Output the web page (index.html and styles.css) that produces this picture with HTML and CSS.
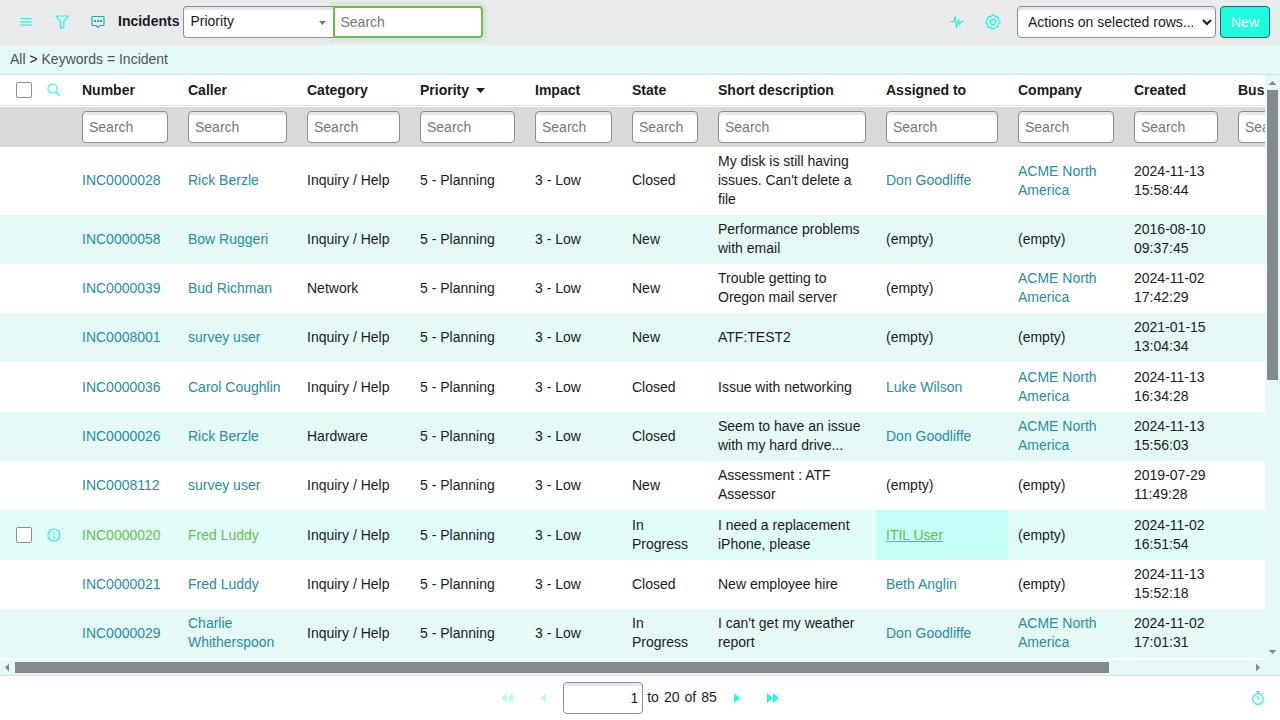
FILE: index.html
```html
<!DOCTYPE html>
<html lang="en">
<head>
<meta charset="utf-8">
<title>Incidents</title>
<link rel="stylesheet" href="styles.css">
</head>
<body>
<header class="navbar">
  <button class="icon-btn" type="button" aria-label="List controls"><svg width="14" height="14" viewBox="0 0 14 14"><path d="M1.500 3.500h11M1.500 6.800h11M1.500 10.200h11" /></svg></button>
  <button class="icon-btn" type="button" aria-label="Filter"><svg width="14" height="14" viewBox="0 0 14 14"><path d="M.8 1h12.400L8.800 6.500v5.800L5.500 13.300V6.500z" /></svg></button>
  <button class="icon-btn icon-btn--dark" type="button" aria-label="Discuss"><svg width="14" height="14" viewBox="0 0 14 14"><path d="M2 1.500h10a1 1 0 0 1 1 1v7a1 1 0 0 1-1 1H9l-2 2-2-2H2a1 1 0 0 1-1-1v-7a1 1 0 0 1 1-1z" /><path class="dots" d="M3 5h2v2H3zM6 5h2v2H6zM9 5h2v2H9z" /></svg></button>
  <h1 class="title">Incidents</h1>
  <div class="search-group">
    <div class="picker">
      <select class="field picker-select" aria-label="Search field"><option>Priority</option></select>
      <svg class="picker-caret" width="7" height="4" viewBox="0 0 7 4"><path d="M0 0h7L3.500 4z" /></svg>
    </div>
    <input class="field search-main" type="text" placeholder="Search" aria-label="Search text">
  </div>
  <div class="navbar-right">
    <button class="icon-btn" type="button" aria-label="Activity stream"><svg width="14" height="14" viewBox="0 0 14 14"><path d="M0 6.500h3.800L5 1.500 6.500 13 8.300 4.500l1.500 5 1.200-3h3" /></svg></button>
    <button class="icon-btn icon-btn--gear" type="button" aria-label="Personalize list"><svg width="16" height="16" viewBox="0 0 16 16"><path d="M10.100 13.200 9.200 14.900H6.800L5.900 13.200 4 13.700 2.300 12 2.800 10.100 1.100 9.200V6.800L2.800 5.900 2.300 4 4 2.300 5.900 2.800 6.800 1.100h2.400L10.100 2.800 12 2.300 13.700 4 13.200 5.900 14.900 6.800v2.400L13.200 10.100" /><circle cx="8" cy="8" r="2.700" /><path d="M11 12.500h3M12.500 11v3" /></svg></button>
    <select class="field actions" aria-label="Actions on selected rows"><option>Actions on selected rows...</option></select>
    <button class="btn-new" type="button">New</button>
  </div>
</header>
<nav class="breadcrumb" aria-label="Filter"><a href="#">All</a> &gt; <a href="#">Keywords = Incident</a></nav>
<main class="list">
  <div class="list-view">
    <table class="grid">
      <colgroup><col class="c-check"><col class="c-icon"><col class="c-number"><col class="c-caller"><col class="c-category"><col class="c-priority"><col class="c-impact"><col class="c-state"><col class="c-desc"><col class="c-assigned"><col class="c-company"><col class="c-created"><col class="c-business"></colgroup>
      <thead>
        <tr class="head">
          <th class="tick"><input class="check" type="checkbox" aria-label="Select all"></th>
          <th class="mark"><button class="icon-btn" type="button" aria-label="Toggle column search"><svg width="14" height="14" viewBox="0 0 14 14"><circle cx="5.500" cy="5.500" r="4.500" /><path d="M9 9l4 4" /></svg></button></th>
          <th>Number</th><th>Caller</th><th>Category</th>
          <th>Priority <svg class="sort" width="9" height="5" viewBox="0 0 9 5"><path d="M0 0h9L4.500 5z" /></svg></th>
          <th>Impact</th><th>State</th><th>Short description</th><th>Assigned to</th><th>Company</th><th>Created</th><th>Business duration</th>
        </tr>
        <tr class="filters">
          <td></td><td></td>
          <td><input class="field" type="text" placeholder="Search" aria-label="Search number"></td>
          <td><input class="field" type="text" placeholder="Search" aria-label="Search caller"></td>
          <td><input class="field" type="text" placeholder="Search" aria-label="Search category"></td>
          <td><input class="field" type="text" placeholder="Search" aria-label="Search priority"></td>
          <td><input class="field" type="text" placeholder="Search" aria-label="Search impact"></td>
          <td><input class="field" type="text" placeholder="Search" aria-label="Search state"></td>
          <td><input class="field" type="text" placeholder="Search" aria-label="Search short description"></td>
          <td><input class="field" type="text" placeholder="Search" aria-label="Search assigned to"></td>
          <td><input class="field" type="text" placeholder="Search" aria-label="Search company"></td>
          <td><input class="field" type="text" placeholder="Search" aria-label="Search created"></td>
          <td><input class="field" type="text" placeholder="Search" aria-label="Search business duration"></td>
        </tr>
      </thead>
      <tbody>
        <tr><td></td><td></td><td><a href="#">INC0000028</a></td><td><a href="#">Rick Berzle</a></td><td>Inquiry / Help</td><td>5 - Planning</td><td>3 - Low</td><td>Closed</td><td>My disk is still having issues. Can't delete a file</td><td><a href="#">Don Goodliffe</a></td><td><a href="#">ACME North America</a></td><td>2024-11-13 15:58:44</td><td></td></tr>
        <tr><td></td><td></td><td><a href="#">INC0000058</a></td><td><a href="#">Bow Ruggeri</a></td><td>Inquiry / Help</td><td>5 - Planning</td><td>3 - Low</td><td>New</td><td>Performance problems with email</td><td>(empty)</td><td>(empty)</td><td>2016-08-10 09:37:45</td><td></td></tr>
        <tr><td></td><td></td><td><a href="#">INC0000039</a></td><td><a href="#">Bud Richman</a></td><td>Network</td><td>5 - Planning</td><td>3 - Low</td><td>New</td><td>Trouble getting to Oregon mail server</td><td>(empty)</td><td><a href="#">ACME North America</a></td><td>2024-11-02 17:42:29</td><td></td></tr>
        <tr><td></td><td></td><td><a href="#">INC0008001</a></td><td><a href="#">survey user</a></td><td>Inquiry / Help</td><td>5 - Planning</td><td>3 - Low</td><td>New</td><td>ATF:TEST2</td><td>(empty)</td><td>(empty)</td><td>2021-01-15 13:04:34</td><td></td></tr>
        <tr><td></td><td></td><td><a href="#">INC0000036</a></td><td><a href="#">Carol Coughlin</a></td><td>Inquiry / Help</td><td>5 - Planning</td><td>3 - Low</td><td>Closed</td><td>Issue with networking</td><td><a href="#">Luke Wilson</a></td><td><a href="#">ACME North America</a></td><td>2024-11-13 16:34:28</td><td></td></tr>
        <tr><td></td><td></td><td><a href="#">INC0000026</a></td><td><a href="#">Rick Berzle</a></td><td>Hardware</td><td>5 - Planning</td><td>3 - Low</td><td>Closed</td><td>Seem to have an issue with my hard drive...</td><td><a href="#">Don Goodliffe</a></td><td><a href="#">ACME North America</a></td><td>2024-11-13 15:56:03</td><td></td></tr>
        <tr><td></td><td></td><td><a href="#">INC0008112</a></td><td><a href="#">survey user</a></td><td>Inquiry / Help</td><td>5 - Planning</td><td>3 - Low</td><td>New</td><td>Assessment : ATF Assessor</td><td>(empty)</td><td>(empty)</td><td>2019-07-29 11:49:28</td><td></td></tr>
        <tr class="active"><td class="tick"><input class="check" type="checkbox" aria-label="Select INC0000020"></td><td class="mark"><button class="icon-btn" type="button" aria-label="Preview INC0000020"><svg width="14" height="14" viewBox="0 0 14 14"><circle cx="7" cy="7" r="6" /><path d="M7 6v4.500M7 3.500v1.500" /></svg></button></td><td><a href="#">INC0000020</a></td><td><a href="#">Fred Luddy</a></td><td>Inquiry / Help</td><td>5 - Planning</td><td>3 - Low</td><td>In Progress</td><td>I need a replacement iPhone, please</td><td class="focused"><a href="#">ITIL User</a></td><td>(empty)</td><td>2024-11-02 16:51:54</td><td></td></tr>
        <tr><td></td><td></td><td><a href="#">INC0000021</a></td><td><a href="#">Fred Luddy</a></td><td>Inquiry / Help</td><td>5 - Planning</td><td>3 - Low</td><td>Closed</td><td>New employee hire</td><td><a href="#">Beth Anglin</a></td><td>(empty)</td><td>2024-11-13 15:52:18</td><td></td></tr>
        <tr><td></td><td></td><td><a href="#">INC0000029</a></td><td><a href="#">Charlie Whitherspoon</a></td><td>Inquiry / Help</td><td>5 - Planning</td><td>3 - Low</td><td>In Progress</td><td>I can't get my weather report</td><td><a href="#">Don Goodliffe</a></td><td><a href="#">ACME North America</a></td><td>2024-11-02 17:01:31</td><td></td></tr>
      </tbody>
    </table>
  </div>
  <div class="bar bar-y" aria-hidden="true">
    <svg width="15" height="15" viewBox="0 0 15 15"><path d="M3.500 10h8l-4-4z" /></svg>
    <div class="track"><div class="thumb"></div></div>
    <svg width="15" height="15" viewBox="0 0 15 15"><path d="M3.500 5h8l-4 4z" /></svg>
  </div>
  <div class="bar bar-x" aria-hidden="true">
    <svg width="15" height="15" viewBox="0 0 15 15"><path d="M9 3.500v8l-4-4z" /></svg>
    <div class="track"><div class="thumb"></div></div>
    <svg width="15" height="15" viewBox="0 0 15 15"><path d="M6 3.500v8l4-4z" /></svg>
  </div>
</main>
<footer class="footer">
  <div class="pager">
    <button class="page-btn" type="button" aria-label="First page" disabled><svg width="14" height="10" viewBox="0 0 14 10"><path d="M7 0v10L1 5zM13 0v10L7 5z" /></svg></button>
    <button class="page-btn" type="button" aria-label="Previous page" disabled><svg width="14" height="10" viewBox="0 0 14 10"><path d="M10 0v10L4 5z" /></svg></button>
    <input class="field page-input" type="text" value="1" aria-label="First row">
    <span class="range"><span>to</span><span>20</span><span>of</span><span>85</span></span>
    <button class="page-btn" type="button" aria-label="Next page"><svg width="14" height="10" viewBox="0 0 14 10"><path d="M4 0v10l6-5z" /></svg></button>
    <button class="page-btn" type="button" aria-label="Last page"><svg width="14" height="10" viewBox="0 0 14 10"><path d="M1 0v10l6-5zM7 0v10l6-5z" /></svg></button>
  </div>
  <button class="icon-btn timer" type="button" aria-label="Response time"><svg width="14" height="14" viewBox="0 0 14 14"><circle cx="7" cy="8" r="5.300" /><path d="M5 .6h4M7 .5v2M7 5v4M11.300 3l1-1" /></svg></button>
</footer>
</body>
</html>
```
FILE: styles.css
```css
* { box-sizing: border-box; }
html, body { height: 100%; }
body {
  margin: 0;
  display: flex;
  flex-direction: column;
  background: #fff;
  color: #181a1f;
  font: 14px/19px "Liberation Sans", Arial, sans-serif;
}
button, input, select { font: inherit; color: inherit; }
a { color: #278da0; text-decoration: none; }
svg { display: block; }

.field {
  height: 32px;
  min-width: 0;
  padding: 0 6px;
  border: 1px solid #8b8f9c;
  border-radius: 4px;
  background: #fff;
  box-shadow: inset 0 3px 1px #e7e7e8;
}
.field::placeholder { color: #747783; opacity: 1; }

.icon-btn {
  display: flex;
  align-items: center;
  justify-content: center;
  flex: none;
  width: 36px;
  height: 32px;
  padding: 0;
  border: 0;
  background: none;
}
.icon-btn svg { fill: none; stroke: #20f8dc; stroke-width: 1.2; }
.icon-btn--dark svg { stroke: #23ae9e; }
.icon-btn--dark .dots { fill: #23ae9e; stroke: none; }

.navbar {
  display: flex;
  align-items: center;
  flex: none;
  height: 45px;
  padding: 0 10px 1px 8px;
  background: #e8eaeb;
}
.title { margin: 0 4px 2px 2px; font-size: 14px; line-height: 19px; }
.search-group { display: flex; }
.picker { position: relative; }
.picker-select {
  display: block;
  width: 150px;
  padding-bottom: 2px;
  appearance: none;
  border-right: 0;
  border-radius: 4px 0 0 4px;
}
.picker-caret { position: absolute; right: 7px; top: 15px; fill: #747783; }
.search-main {
  width: 150px;
  padding: 0 5px;
  border: 2px solid #6abf4b;
  border-radius: 0 4px 4px 0;
  box-shadow: 0 0 0 4px #d9e6d7;
  outline: none;
}
.navbar-right { display: flex; align-items: center; margin-left: auto; }
.icon-btn--gear { margin-right: 6px; }
.actions { width: 199px; }
.btn-new {
  height: 32px;
  margin-left: 4px;
  padding: 0 10px;
  border: 1px solid #126e62;
  border-radius: 4px;
  background: #1ffbdf;
  color: #fff;
}

.breadcrumb {
  flex: none;
  height: 30px;
  padding: 5px 10px;
  border-bottom: 1px solid #dcdfe1;
  background: #e5faf7;
}
.breadcrumb a { color: #4c5260; }

.list {
  flex: 1;
  min-height: 0;
  display: grid;
  grid-template-columns: minmax(0, 1fr) 15px;
  grid-template-rows: minmax(0, 1fr) 15px;
  background: #e5faf7;
}
.list-view { overflow: hidden; background: #fff; }
.grid {
  width: 100%;
  min-width: 1428px;
  table-layout: fixed;
  border-collapse: separate;
  border-spacing: 0;
}
.c-check { width: 40px; }
.c-icon { width: 32px; }
.c-number { width: 106px; }
.c-caller { width: 119px; }
.c-category { width: 113px; }
.c-priority { width: 115px; }
.c-impact { width: 97px; }
.c-state { width: 86px; }
.c-desc { width: 168px; }
.c-assigned { width: 132px; }
.c-company { width: 116px; }
.c-created { width: 104px; }

.grid th {
  height: 31px;
  padding: 0 10px;
  border-bottom: 1px solid #dcdfe1;
  text-align: left;
  white-space: nowrap;
}
.grid .sort { display: inline-block; margin: 0 0 2px 3px; fill: #181a1f; }
.grid td { padding: 5px 10px 6px; vertical-align: middle; }
.grid .filters td { padding: 4px 10px; border-top: 1px solid #fff; background: #d8d9db; }
.filters .field { display: block; width: 100%; }
.grid tbody tr:nth-child(3n+5) td:not(.tick, .mark) { padding-top: 6px; }
.grid tbody tr:nth-child(even) { background: #e5faf7; }
.grid tbody tr.active { background: #e0fdfa; }
.active a { color: #6abf4b; }
.active .focused { background: #c4fdf6; }
.focused a { text-decoration: underline; }
.grid .tick { padding: 0 8px 0 16px; }
.grid .mark { padding: 0; }
.mark .icon-btn { width: 28px; height: 30px; }
.check {
  display: block;
  width: 16px;
  height: 16px;
  margin: 0;
  appearance: none;
  border: 1px solid #8b8f9c;
  border-radius: 2px;
  background: #fff;
}

.bar { display: flex; background: #e5faf7; }
.bar svg { flex: none; fill: #848a8c; }
.bar .track { flex: 1; }
.bar .thumb { background: #848a8c; }
.bar-y { flex-direction: column; }
.bar-y .track { padding: 0 2px; }
.bar-y .thumb { height: 52.2%; }
.bar-x .track { padding: 2px 0; }
.bar-x .thumb { width: 88.6%; height: 11px; }

.footer {
  display: grid;
  grid-template-columns: 1fr auto 1fr;
  align-items: center;
  flex: none;
  height: 45px;
  border-top: 1px solid #dcdfe1;
}
.pager { grid-column: 2; display: flex; align-items: center; }
.page-btn {
  display: flex;
  align-items: center;
  justify-content: center;
  width: 36px;
  height: 32px;
  padding: 0;
  border: 0;
  background: none;
}
.page-btn svg { fill: #1ffbdf; }
.page-btn:disabled { opacity: 0.3; }
.page-input { width: 80px; margin: 0 4px 0 2px; padding: 0 4px; text-align: right; }
.range { display: flex; gap: 5px; margin-right: 2px; padding-bottom: 2px; }
.timer { justify-self: end; margin-right: 4px; }
```
